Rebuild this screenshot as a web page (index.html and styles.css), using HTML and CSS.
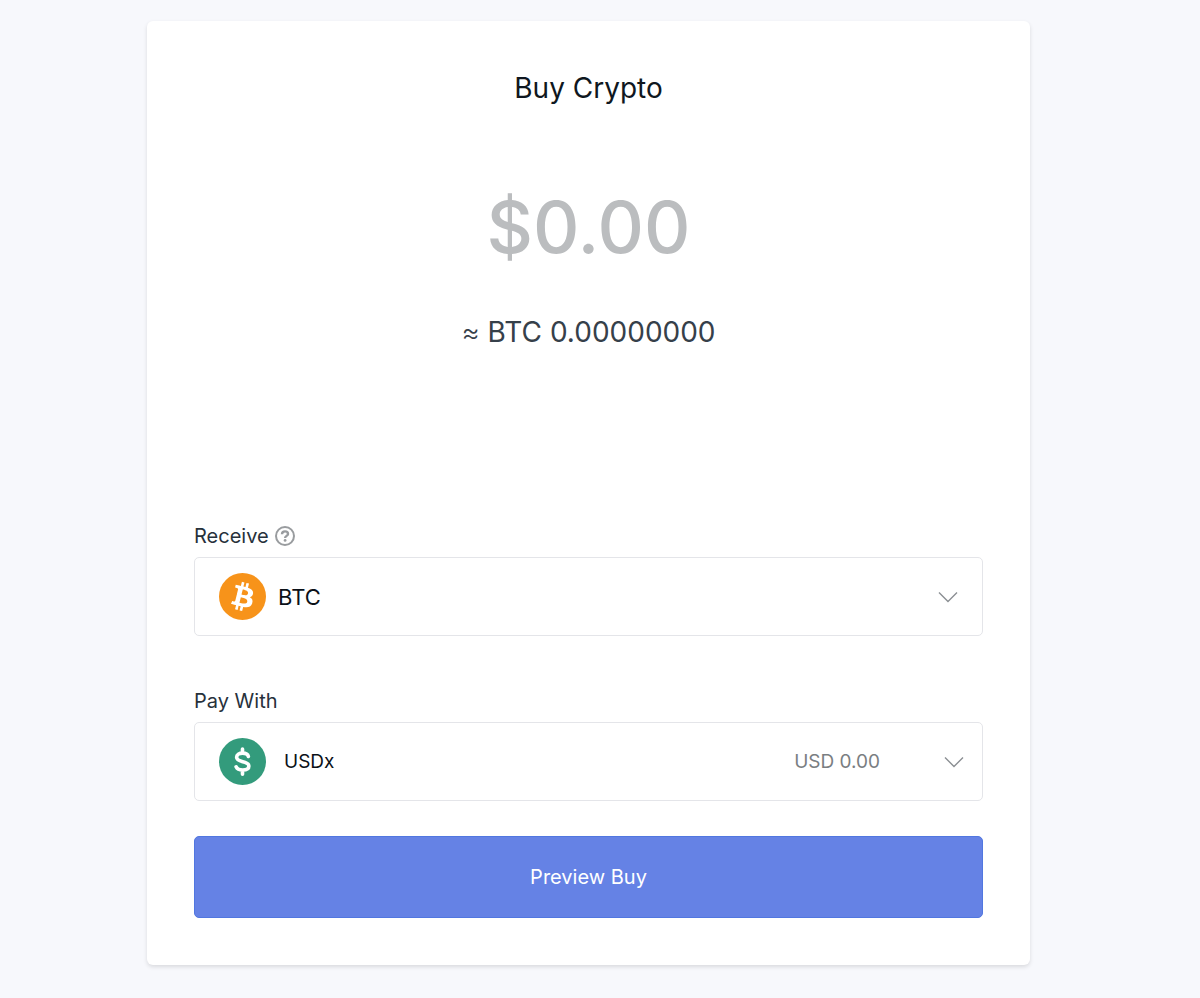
FILE: index.html
```html
<!DOCTYPE html>
<html lang="en">
<head>
  <meta charset="UTF-8" />
  <meta name="viewport" content="width=device-width, initial-scale=1.0" />
  <title>Buy Crypto</title>
  <link rel="stylesheet" href="styles.css">
</head>
<body>
  <form class="card">
    <h1>Buy Crypto</h1>
    <input class="amount" type="text" inputmode="decimal" placeholder="$0.00" aria-label="Amount">
    <p class="estimate"><span class="approx">≈</span> BTC 0.00000000</p>

    <div class="label-row">
      <label for="receive">Receive</label>
      <button class="help" type="button" aria-label="Help">
        <svg width="20" height="20" viewBox="0 0 20 20" fill="none" stroke="currentColor" stroke-width="2">
          <circle cx="10" cy="10" r="9" />
          <path stroke-width="2.4" d="M7 8.2C7 6.2 8.2 5.4 10 5.4s3 1 3 2.500c0 2-2.900 2-2.900 4.100" />
          <circle cx="10.1" cy="14.4" r="1.4" fill="currentColor" stroke="none" />
        </svg>
      </button>
    </div>
    <div class="field">
      <svg class="coin" width="47" height="47" viewBox="0 0 32 32">
        <circle cx="16" cy="16" r="16" fill="#f7931a" />
        <path fill="#fff" d="M23.189 14.02c.314-2.096-1.283-3.223-3.465-3.975l.708-2.84-1.728-.43-.69 2.765c-.454-.114-.92-.22-1.385-.326l.695-2.783L15.596 6l-.708 2.839c-.376-.086-.746-.17-1.104-.26l.002-.009-2.384-.595-.46 1.846s1.283.294 1.256.312c.7.175.826.638.805 1.006l-.806 3.235c.048.012.11.03.18.057l-.183-.045-1.13 4.532c-.086.212-.303.531-.793.41.018.025-1.256-.313-1.256-.313l-.858 1.978 2.25.561c.418.105.828.215 1.231.318l-.715 2.872 1.727.43.708-2.84c.472.127.93.245 1.378.357l-.706 2.828 1.728.43.715-2.866c2.948.558 5.164.333 6.097-2.333.752-2.146-.037-3.385-1.588-4.192 1.13-.26 1.98-1.003 2.207-2.538zm-3.95 5.538c-.533 2.147-4.148.986-5.32.695l.95-3.805c1.172.293 4.929.872 4.37 3.11zm.535-5.569c-.487 1.953-3.495.96-4.47.717l.86-3.45c.975.243 4.118.696 3.61 2.733z" />
      </svg>
      <select class="receive" id="receive">
        <option>BTC</option>
      </select>
      <svg class="chevron" width="20" height="12" viewBox="0 0 20 12" fill="none" stroke="currentColor" stroke-width="1.4">
        <path d="M1 1.500l9 9 9-9" />
      </svg>
    </div>

    <div class="label-row">
      <label for="pay">Pay With</label>
    </div>
    <div class="field field-pay">
      <svg class="coin" width="47" height="47" viewBox="0 0 48 48">
        <circle cx="24" cy="24" r="24" fill="#339b7c" />
        <path d="M30 18.800c-.6-2.200-2.800-3.300-5.800-3.300-3.700 0-6.200 1.600-6.200 4.200 0 6 12.500 2.900 12.500 8.900 0 2.600-2.600 4.100-6.300 4.100-3.300 0-5.700-1.100-6.700-3.300M24 11.300v4M24 33v4" fill="none" stroke="#fff" stroke-width="3.700" stroke-linecap="round" />
      </svg>
      <select class="pay" id="pay">
        <option>USDx</option>
      </select>
      <span class="balance">USD 0.00</span>
      <svg class="chevron" width="20" height="12" viewBox="0 0 20 12" fill="none" stroke="currentColor" stroke-width="1.4">
        <path d="M1 1.500l9 9 9-9" />
      </svg>
    </div>

    <button class="preview" type="submit">Preview Buy</button>
  </form>
</body>
</html>
```
FILE: styles.css
```css
* {
  box-sizing: border-box;
}
body {
  margin: 0;
  padding: 21px 170px 32px 147px;
  background: #f7f8fc;
  color: #0f1720;
  font-family: Inter, sans-serif;
  font-size: 20px;
}
.card {
  display: flex;
  flex-direction: column;
  padding: 47px;
  background: #fff;
  border-radius: 6px;
  box-shadow: 0 2px 4px rgba(0, 0, 0, 0.12);
}
h1 {
  margin: 0;
  font-size: 28px;
  font-weight: 400;
  line-height: 40px;
  text-align: center;
}
.amount {
  width: 100%;
  height: 88px;
  margin-top: 74px;
  padding: 0;
  border: none;
  outline: none;
  background: none;
  font-family: inherit;
  font-size: 72px;
  font-weight: 500;
  text-align: center;
}
.amount::placeholder {
  color: #bbbdbf;
  opacity: 1;
}
.estimate {
  margin: 42px 0 168px;
  color: #36404a;
  font-size: 28px;
  line-height: 40px;
  text-align: center;
}
.approx {
  font-weight: 300;
}
.label-row {
  display: flex;
  align-items: center;
  gap: 6px;
  height: 32px;
  margin-bottom: 5px;
  color: #27313b;
}
.help {
  display: flex;
  padding: 0;
  border: none;
  background: none;
  color: #999c9f;
  cursor: pointer;
}
.field {
  display: flex;
  align-items: center;
  height: 79px;
  margin-bottom: 49px;
  padding: 0 24px;
  border: 1px solid #e4e5e9;
  border-radius: 5px;
}
.field-pay {
  margin-bottom: 35px;
  padding-right: 18px;
}
select {
  flex: 1;
  height: 48px;
  padding: 0;
  appearance: none;
  border: none;
  outline: none;
  background: none;
  color: #0b1118;
  font-family: inherit;
  cursor: pointer;
}
.receive {
  margin-left: 12px;
  font-size: 22px;
}
.pay {
  margin-left: 18px;
  font-size: 19px;
}
.balance {
  margin-right: 64px;
  color: #7a7e82;
  font-size: 19px;
}
.chevron {
  color: #8b8f93;
}
.preview {
  height: 82px;
  border: 1px solid #5177e0;
  border-radius: 5px;
  background: #6582e5;
  color: #fff;
  font-family: inherit;
  font-size: 20px;
  cursor: pointer;
}
```
